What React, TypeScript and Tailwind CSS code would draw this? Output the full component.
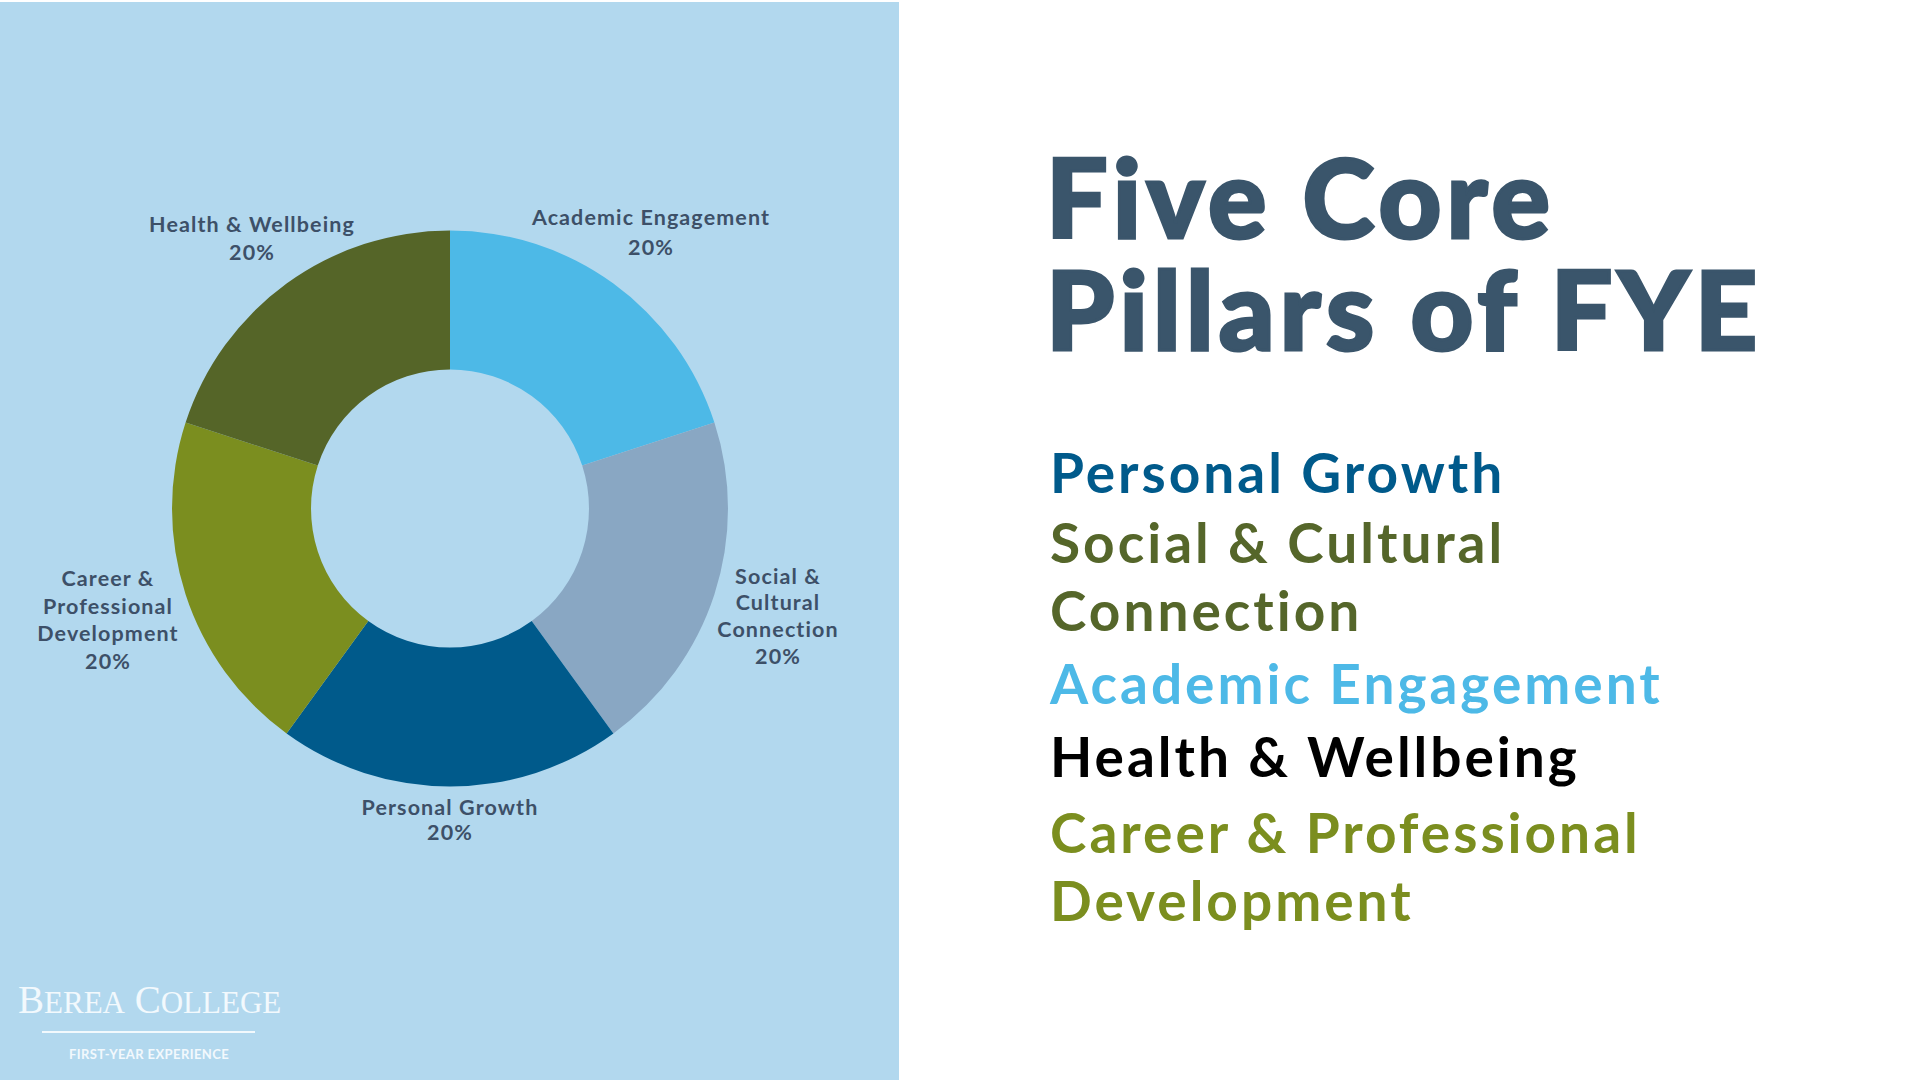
import React from 'react';

const CX = 450;
const CY = 508.5;
const R_OUT = 278;
const R_IN = 139;

const slices = [
  { name: 'Academic Engagement', color: '#4db9e7' },
  { name: 'Social & Cultural Connection', color: '#89a7c3' },
  { name: 'Personal Growth', color: '#005a8b' },
  { name: 'Career & Professional Development', color: '#7b8e1f' },
  { name: 'Health & Wellbeing', color: '#556528' },
];

function pt(deg: number, r: number) {
  const t = (deg * Math.PI) / 180;
  return [CX + r * Math.sin(t), CY - r * Math.cos(t)];
}

function slicePath(a0: number, a1: number) {
  const [x0, y0] = pt(a0, R_OUT);
  const [x1, y1] = pt(a1, R_OUT);
  const [x2, y2] = pt(a1, R_IN);
  const [x3, y3] = pt(a0, R_IN);
  return `M${x0} ${y0} A${R_OUT} ${R_OUT} 0 0 1 ${x1} ${y1} L${x2} ${y2} A${R_IN} ${R_IN} 0 0 0 ${x3} ${y3} Z`;
}

const labels = [
  { x: 651, lines: ['Academic Engagement', '20%'], y: 225, step: 29.5 },
  { x: 778, lines: ['Social &', 'Cultural', 'Connection', '20%'], y: 583.5, step: 26.7 },
  { x: 450, lines: ['Personal Growth', '20%'], y: 815, step: 25 },
  { x: 108, lines: ['Career &', 'Professional', 'Development', '20%'], y: 585.7, step: 27.8 },
  { x: 252, lines: ['Health & Wellbeing', '20%'], y: 231.7, step: 28.5 },
];

function DonutChart() {
  return (
    <svg width="899" height="958" viewBox="0 2 899 958" className="block">
      {slices.map((s, i) => (
        <path key={s.name} d={slicePath(i * 72, (i + 1) * 72)} fill={s.color} />
      ))}
      {labels.map(l => (
        <text
          key={l.lines[0]}
          textAnchor="middle"
          fill="#3d5068"
          fontFamily="Lato, 'Noto Sans', sans-serif"
          fontSize="21.5"
          fontWeight="700"
          letterSpacing="1.1"
        >
          {l.lines.map((line, j) => (
            <tspan key={j} x={l.x} y={l.y + j * l.step}>
              {line}
            </tspan>
          ))}
        </text>
      ))}
    </svg>
  );
}

function Logo() {
  return (
    <div className="pl-[18px] pt-[21px] text-[#f2f9fd]">
      <div className="whitespace-nowrap text-[39px] leading-[38px] font-['Liberation_Serif',serif]">
        B<span className="text-[31px]">EREA</span> C<span className="text-[31px]">OLLEGE</span>
      </div>
      <div className="ml-[24px] mt-[9px] h-[2px] w-[213px] bg-[#f2f9fd]" />
      <div className="ml-[51px] mt-[15px] whitespace-nowrap text-[13px] leading-[13px] font-bold tracking-[0.4px] font-['Lato',sans-serif]">
        FIRST-YEAR EXPERIENCE
      </div>
    </div>
  );
}

export default function App() {
  return (
    <div className="flex h-[1080px] w-[1920px] overflow-hidden bg-white font-['Lato','Noto_Sans',sans-serif]">
      <aside className="mt-[2px] flex h-[1078px] w-[899px] flex-col bg-[#b2d8ee]">
        <DonutChart />
        <Logo />
      </aside>

      <main className="flex-1 pl-[151px] pt-[140px]">
        <h1 className="-ml-[4px] text-[109px] font-black leading-[112px] tracking-[5.2px] text-[#3a556b] [-webkit-text-stroke:3px_#3a556b]">
          <span className="block">Five Core</span>
          <span className="block">Pillars of FYE</span>
        </h1>

        <ul className="mt-[74px] text-[55px] font-bold leading-[68px] tracking-[3px]">
          <li className="text-[#005a8b]">Personal Growth</li>
          <li className="mt-[2px] text-[#55662a]">
            Social &amp; Cultural
            <br />
            Connection
          </li>
          <li className="mt-[5px] text-[#4db9e7]">Academic Engagement</li>
          <li className="mt-[5px] text-black">Health &amp; Wellbeing</li>
          <li className="mt-[8px] text-[#7b8e1f]">
            Career &amp; Professional
            <br />
            Development
          </li>
        </ul>
      </main>
    </div>
  );
}
